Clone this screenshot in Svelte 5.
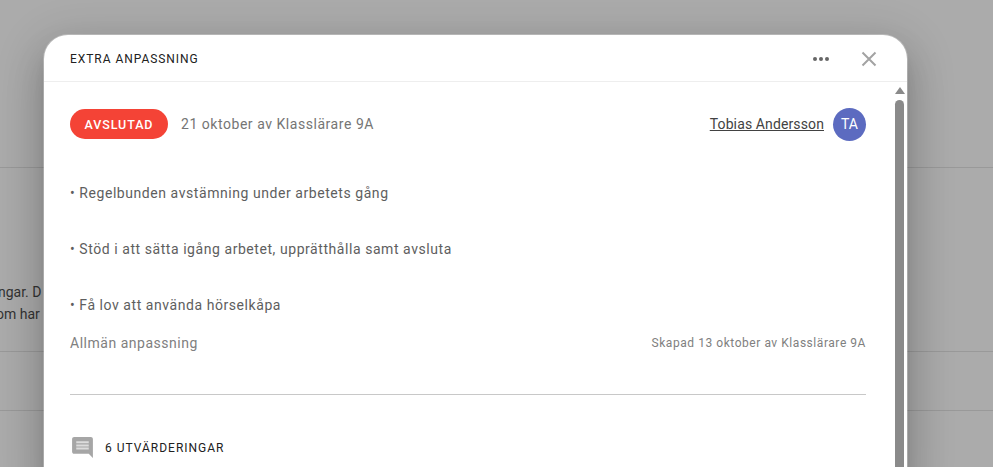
<script lang="ts">
    const bullets = [
        'Regelbunden avstämning under arbetets gång',
        'Stöd i att sätta igång arbetet, upprätthålla samt avsluta',
        'Få lov att använda hörselkåpa',
    ];
</script>

<div class="page">
    <div class="backdrop">
        <div class="row top"></div>
        <div class="row para">
            <p class="first">ngar. D</p>
            <p class="second">om har</p>
        </div>
        <div class="row short"></div>
    </div>

    <section class="modal">
        <header>
            <h2>EXTRA ANPASSNING</h2>
            <button class="more" aria-label="Mer">
                <svg width="18" height="6" viewBox="0 0 18 6" fill="#666"><circle cx="3" cy="3" r="2" /><circle cx="9" cy="3" r="2" /><circle cx="15" cy="3" r="2" /></svg>
            </button>
            <button class="close" aria-label="Stäng">
                <svg width="16" height="16" viewBox="0 0 16 16" stroke="#a3a3a3" stroke-width="2" fill="none"><path d="M1.500 1.500 14.500 14.500M14.500 1.500 1.500 14.500" /></svg>
            </button>
        </header>

        <div class="scroller">
            <div class="content">
                <div class="status">
                    <span class="badge">AVSLUTAD</span>
                    <span class="date">21 oktober av Klasslärare 9A</span>
                    <a href="#student" class="student">Tobias Andersson</a>
                    <span class="avatar">TA</span>
                </div>

                <div class="bullets">
                    {#each bullets as item}
                        <p>• {item}</p>
                    {/each}
                </div>

                <div class="meta">
                    <span class="kind">Allmän anpassning</span>
                    <span class="created">Skapad 13 oktober av Klasslärare 9A</span>
                </div>

                <hr />

                <div class="reviews">
                    <svg width="25" height="25" viewBox="0 0 24 24">
                        <path fill="#a6a6a6" d="M21.990 4c0-1.100-.89-2-1.990-2H4c-1.100 0-2 .9-2 2v12c0 1.100.9 2 2 2h14l4 4-.01-18z" />
                        <path fill="#dcdcdc" d="M6 6h12v2H6zM6 9h12v2H6zM6 12h12v2H6z" />
                    </svg>
                    <span>6 UTVÄRDERINGAR</span>
                </div>
            </div>

            <div class="scrollbar">
                <span class="arrow"></span>
                <span class="thumb"></span>
            </div>
        </div>
    </section>
</div>

<style>
    :global(body) {
        margin: 0;
    }

    .page {
        position: relative;
        height: 467px;
        overflow: hidden;
        background: #ababab;
        font-family: Roboto, "Liberation Sans", sans-serif;
    }

    .backdrop {
        display: flex;
        flex-direction: column;
        padding-top: 167px;
    }

    .row {
        border-top: 1px solid #999;
    }

    .top {
        height: 0;
    }

    .para {
        height: 183px;
        padding-top: 113px;
        box-sizing: border-box;
        border-top: 0;
        font-size: 14px;
        line-height: 22px;
        color: #333;
    }

    .para p {
        margin: 0;
        white-space: nowrap;
    }

    .first {
        text-indent: -2px;
    }

    .second {
        text-indent: -4px;
    }

    .short {
        height: 58px;
        border-bottom: 1px solid #999;
    }

    .modal {
        position: absolute;
        left: 44px;
        top: 35px;
        width: 863px;
        height: 460px;
        display: flex;
        flex-direction: column;
        background: #fff;
        border-radius: 24px;
        box-shadow: 0 0 0 1px rgba(255, 255, 255, 0.25), 0 11px 15px -7px rgba(0, 0, 0, 0.2), 0 24px 38px 3px rgba(0, 0, 0, 0.14), 0 9px 46px 8px rgba(0, 0, 0, 0.12);
    }

    header {
        display: flex;
        align-items: center;
        height: 44px;
        padding: 2px 30px 0 26px;
        border-bottom: 1px solid #eee;
        flex: none;
    }

    h2 {
        margin: 0 auto 0 0;
        font-size: 12px;
        font-weight: 400;
        letter-spacing: 0.95px;
        color: #212121;
    }

    button {
        display: flex;
        padding: 0;
        border: 0;
        background: none;
    }

    .more {
        margin-right: 31px;
    }

    .scroller {
        display: flex;
        flex: 1;
        min-height: 0;
    }

    .content {
        flex: 1;
        padding: 25px 0 0 26px;
        margin-right: 29px;
    }

    .status {
        display: flex;
        align-items: center;
        height: 34px;
    }

    .badge {
        display: flex;
        align-items: center;
        justify-content: center;
        width: 98px;
        height: 30px;
        border-radius: 15px;
        background: #f44336;
        color: #fff;
        font-size: 12.500px;
        font-weight: 500;
        letter-spacing: 0.9px;
    }

    .date {
        margin-left: 13px;
        margin-right: auto;
        font-size: 14px;
        letter-spacing: 0.54px;
        color: #757575;
    }

    .student {
        font-size: 14px;
        letter-spacing: 0.12px;
        color: #424242;
    }

    .avatar {
        display: flex;
        align-items: center;
        justify-content: center;
        width: 33px;
        height: 33px;
        margin-left: 9px;
        border-radius: 50%;
        background: #5c6bc0;
        color: #fff;
        font-size: 14px;
    }

    .bullets {
        padding-top: 41px;
    }

    .bullets p {
        margin: 0 0 34px;
        font-size: 14px;
        line-height: 22px;
        letter-spacing: 0.56px;
        color: #5e5e5e;
    }

    .bullets p:last-child {
        margin-bottom: 0;
    }

    .meta {
        display: flex;
        align-items: center;
        justify-content: space-between;
        margin-top: 19px;
    }

    .kind {
        font-size: 14px;
        letter-spacing: 0.52px;
        color: #808080;
    }

    .created {
        font-size: 12px;
        letter-spacing: 0.55px;
        color: #808080;
    }

    hr {
        height: 1px;
        margin: 43px 0 0;
        border: 0;
        background: #c8c8c8;
    }

    .reviews {
        display: flex;
        align-items: center;
        gap: 10px;
        margin-top: 40px;
        font-size: 12px;
        letter-spacing: 1px;
        color: #212121;
    }

    .scrollbar {
        display: flex;
        flex-direction: column;
        align-items: center;
        width: 9px;
        margin-right: 3px;
        padding-top: 5px;
        flex: none;
    }

    .arrow {
        width: 0;
        height: 0;
        border: 5px solid transparent;
        border-top: 0;
        border-bottom: 7px solid #8a8a8a;
    }

    .thumb {
        flex: 1;
        width: 9px;
        margin-top: 6px;
        border-radius: 5px 5px 0 0;
        background: #8a8a8a;
    }
</style>
